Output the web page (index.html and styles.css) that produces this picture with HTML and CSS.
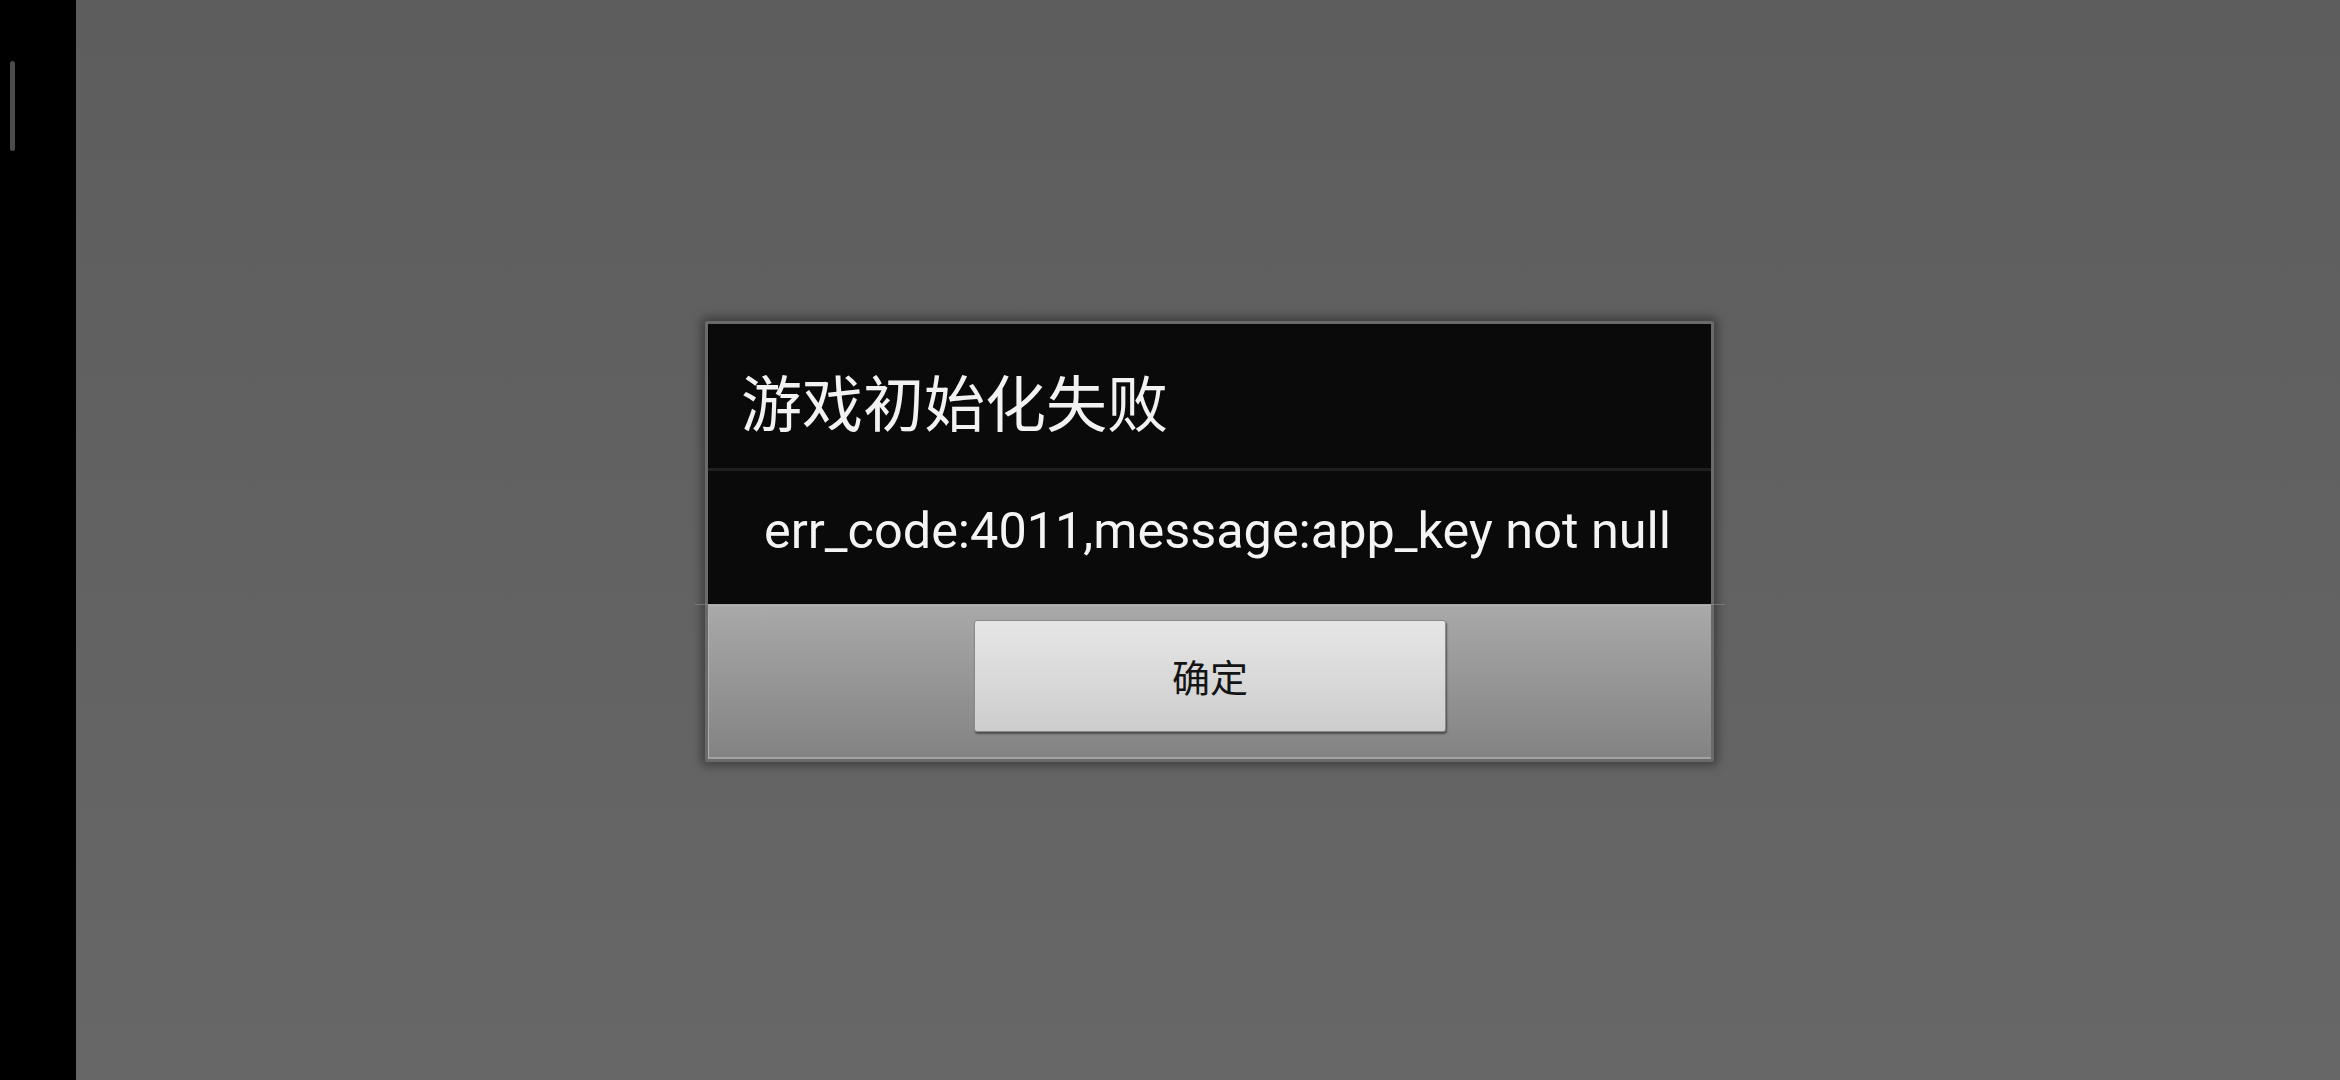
FILE: index.html
```html
<!DOCTYPE html>
<html lang="zh-CN">
<head>
<meta charset="utf-8">
<title>游戏初始化失败</title>
<link rel="stylesheet" href="styles.css">
</head>
<body>
<div class="screen">
  <div class="side">
    <div class="scroll-thumb"></div>
  </div>
  <div class="main">
    <div class="dialog">
      <div class="title">游戏初始化失败</div>
      <div class="divider"></div>
      <div class="message">err_code:4011,message:app_key not null</div>
      <div class="buttons">
        <button class="btn">确定</button>
      </div>
    </div>
  </div>
</div>
</body>
</html>
```

FILE: styles.css
```css
html, body {
  margin: 0;
  padding: 0;
  width: 2340px;
  height: 1080px;
  overflow: hidden;
  background: #000;
}
.screen {
  display: flex;
  width: 2340px;
  height: 1080px;
}
.side {
  width: 76px;
  flex: none;
  background: #000;
  padding-top: 61px;
  padding-left: 10px;
  box-sizing: border-box;
}
.scroll-thumb {
  width: 5px;
  height: 90px;
  border-radius: 3px;
  background: #4b4b4b;
}
.main {
  flex: 1;
  display: flex;
  align-items: center;
  justify-content: center;
  padding-left: 3px;
  padding-top: 2px;
  background: linear-gradient(to bottom, #5d5d5d, #676767);
}
.dialog {
  width: 1003px;
  border: 3px solid #6a6a6a;
  border-radius: 2px;
  box-shadow: 0 0 10px 4px rgba(0, 0, 0, 0.35);
  background: #0a0a0a;
  display: flex;
  flex-direction: column;
  position: relative;
}
.title {
  height: 144px;
  box-sizing: border-box;
  padding: 41px 0 0 33px;
  font-family: "Noto Sans CJK SC", "Noto Sans", sans-serif;
  font-size: 61px;
  line-height: 72px;
  color: #f2f2f2;
}
.divider {
  height: 3px;
  background: #1f1f1f;
}
.message {
  height: 133px;
  box-sizing: border-box;
  padding: 30px 0 0 56px;
  font-family: Roboto, "Liberation Sans", sans-serif;
  font-size: 50.4px;
  line-height: 60px;
  color: #f4f4f4;
  white-space: nowrap;
}
.buttons {
  height: 155px;
  box-sizing: border-box;
  border-top: 2px solid #b4b4b4;
  border-bottom: 2px solid #a2a2a2;
  border-left: 1px solid #b0b0b0;
  background: linear-gradient(to bottom, #a9a9a9, #838383);
  display: flex;
  justify-content: center;
  padding-top: 14px;
  position: relative;
}
.buttons::before {
  content: "";
  position: absolute;
  left: -14px;
  right: -14px;
  top: -2px;
  height: 1px;
  background: rgba(150, 150, 150, 0.5);
}
.btn {
  width: 472px;
  height: 112px;
  margin: 0;
  padding: 0;
  border: 1px solid #8a8a8a;
  border-radius: 3px;
  background: linear-gradient(to bottom, #e6e6e6, #cdcdcd);
  box-shadow: 1px 2px 2px rgba(0, 0, 0, 0.45);
  font-family: "Noto Sans CJK SC", "Noto Sans", sans-serif;
  font-size: 38px;
  line-height: 40px;
  color: #141414;
}
```
